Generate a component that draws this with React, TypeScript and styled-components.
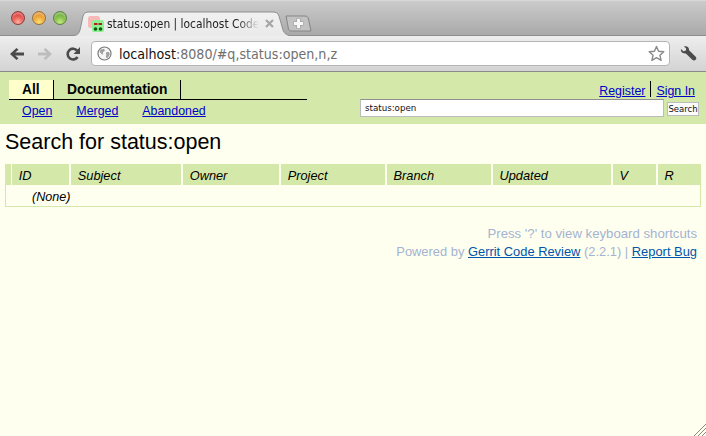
import styled, { createGlobalStyle } from "styled-components";
import type { ReactNode } from "react";

const GlobalStyle = createGlobalStyle`
  html, body {
    margin: 0;
    padding: 0;
    height: 100%;
    background: #fffff0;
    overflow: hidden;
  }
  #root {
    height: 100%;
  }
`;

const Page = styled.div`
  position: relative;
  width: 706px;
  height: 436px;
  overflow: hidden;
  background: #fffff0;
  font-family: "Liberation Sans", Arial, sans-serif;
  color: #000;
`;

/* browser chrome */
const TabStrip = styled.div`
  position: relative;
  z-index: 1;
  height: 35px;
  box-sizing: border-box;
  border-top: 1px solid #d8d8d8;
  background: linear-gradient(#cbcbcb, #a9a9a9);
  display: flex;
  align-items: flex-end;
  padding-left: 11px;
`;

const Lights = styled.div`
  display: flex;
  gap: 7px;
  align-self: flex-start;
  margin-top: 10px;
  width: 67px;
`;

const Light = styled.span<{ $top: string; $bottom: string; $edge: string }>`
  width: 14px;
  height: 14px;
  border-radius: 50%;
  box-sizing: border-box;
  border: 1px solid ${(p) => p.$edge};
  background: radial-gradient(
    circle at 50% 85%,
    ${(p) => p.$bottom} 0%,
    ${(p) => p.$top} 75%
  );
  box-shadow: inset 0 2px 2px rgba(255, 255, 255, 0.45);
`;

const Tab = styled.div`
  position: relative;
  width: 212px;
  height: 24px;
  display: flex;
  align-items: center;
  padding-left: 10px;
  box-sizing: border-box;
`;

const TabShape = styled.svg`
  position: absolute;
  left: -4px;
  bottom: -1px;
`;

const Favicon = styled.svg`
  position: relative;
  flex: none;
  margin-top: 2px;
`;

const TabTitle = styled.span`
  position: relative;
  width: 154px;
  margin-left: 3px;
  margin-top: 1px;
  overflow: hidden;
  white-space: nowrap;
  font: 11.9px "DejaVu Sans Condensed", "DejaVu Sans", sans-serif;
  color: #222;
  -webkit-mask-image: linear-gradient(to right, #000 130px, transparent 152px);
  mask-image: linear-gradient(to right, #000 130px, transparent 152px);
`;

const TabClose = styled.svg`
  position: relative;
  margin-left: 4px;
  flex: none;
`;

const NewTab = styled.svg`
  margin-bottom: 3px;
  margin-left: -5px;
  flex: none;
`;

const Toolbar = styled.div`
  height: 37px;
  box-sizing: border-box;
  border-top: 1px solid #8e8e8e;
  border-bottom: 1px solid #8a8a8a;
  background: linear-gradient(#eeeeee, #d3d3d3);
  display: flex;
  align-items: center;
  padding: 0 9px;
`;

const NavIcon = styled.svg<{ $gap: number }>`
  flex: none;
  margin-right: ${(p) => p.$gap}px;
`;

const AddressBar = styled.div`
  flex: none;
  width: 579px;
  height: 25px;
  box-sizing: border-box;
  border: 1px solid #b4b4b4;
  border-radius: 4px;
  background: #fff;
  display: flex;
  align-items: center;
  padding: 0 4px 0 5px;
  margin: 0 10px 0 1px;
`;

const Url = styled.div`
  flex: 1;
  margin-left: 7px;
  font: 14.1px "DejaVu Sans Condensed", "DejaVu Sans", sans-serif;
  color: #707070;
  white-space: nowrap;
`;

const UrlHost = styled.span`
  color: #111;
`;

/* gerrit header */
const Header = styled.div`
  height: 52px;
  background: #d4e9a9;
  display: flex;
  justify-content: space-between;
  box-sizing: border-box;
  padding: 8px 7px 0 9px;
`;

const MenuColumn = styled.div`
  width: 298px;
`;

const TopMenu = styled.div`
  display: flex;
  height: 20px;
  box-sizing: border-box;
  border-bottom: 1px solid #000;
`;

const TopItem = styled.div<{ $active?: boolean; $width: number }>`
  width: ${(p) => p.$width}px;
  box-sizing: border-box;
  border-right: 1px solid #000;
  background: ${(p) => (p.$active ? "#ffffcc" : "transparent")};
  font-size: 13.8px;
  font-weight: bold;
  line-height: 19px;
  padding-left: 13px;
`;

const SubMenu = styled.div`
  display: flex;
  gap: 24px;
  padding: 4px 0 0 13px;
`;

const Anchor = styled.a`
  color: #0000cc;
  text-decoration: underline;
  font-size: 12.4px;
`;

const SearchColumn = styled.div`
  display: flex;
  flex-direction: column;
  align-items: flex-end;
`;

const UserLinks = styled.div`
  display: flex;
  height: 16px;
  margin: 1px 4px 0 0;
  line-height: 20px;
`;

const UserLink = styled(Anchor)<{ $divider?: boolean }>`
  padding: ${(p) => (p.$divider ? "0 5px 0 0" : "0 0 0 5px")};
  border-right: ${(p) => (p.$divider ? "1px solid #000" : "none")};
`;

const SearchRow = styled.div`
  display: flex;
  align-items: center;
  gap: 3px;
  margin-top: 2px;
`;

const SearchInput = styled.input`
  width: 304px;
  height: 18px;
  box-sizing: border-box;
  border: 1px solid #bcbcbc;
  border-top: 1px solid #8f8f8f;
  background: #fff;
  padding: 0 4px;
  font: 8.7px "DejaVu Sans", sans-serif;
  color: #111;
  outline: none;
`;

const SearchButton = styled.button`
  width: 32px;
  height: 14px;
  margin-top: 2px;
  box-sizing: border-box;
  border: 1px solid #bdbdbd;
  background: #fbfbfb;
  padding: 0;
  font: 8.5px "DejaVu Sans", sans-serif;
  color: #111;
`;

/* search results */
const Title = styled.h1`
  margin: 0;
  padding: 6px 0 0 5px;
  height: 40px;
  box-sizing: border-box;
  font-size: 21.5px;
  font-weight: normal;
  line-height: 24px;
`;

const Results = styled.div`
  margin-left: 5px;
  width: 696px;
`;

const HeadRow = styled.div`
  display: flex;
  height: 21px;
`;

const HeadCell = styled.div<{ $width: number; $gap: number }>`
  width: ${(p) => p.$width}px;
  margin-right: ${(p) => p.$gap}px;
  box-sizing: border-box;
  padding-left: 6.4px;
  background: #d4e9a9;
  font-size: 12.8px;
  font-style: italic;
  line-height: 23px;
`;

const EmptyRow = styled.div`
  height: 22px;
  box-sizing: border-box;
  border-left: 1px solid #d4e9a9;
  border-right: 1px solid #d4e9a9;
  border-bottom: 1px solid #d4e9a9;
  padding-left: 26px;
  font-size: 12.6px;
  font-style: italic;
  line-height: 24px;
`;

const Footer = styled.div`
  margin: 18px 9px 0 0;
  text-align: right;
  line-height: 18px;
  color: #a3b3d1;
`;

const FooterLine = styled.div<{ $size: number }>`
  font-size: ${(p) => p.$size}px;
`;

const FooterLink = styled.a`
  color: #0055aa;
  text-decoration: underline;
`;

const Grip = styled.svg`
  position: absolute;
  right: 0;
  bottom: 0;
`;

const columns: { label: string; width: number; gap: number }[] = [
  { label: "", width: 6, gap: 1 },
  { label: "ID", width: 57, gap: 2 },
  { label: "Subject", width: 110, gap: 2 },
  { label: "Owner", width: 96, gap: 2 },
  { label: "Project", width: 104, gap: 2 },
  { label: "Branch", width: 104, gap: 2 },
  { label: "Updated", width: 118, gap: 2 },
  { label: "V", width: 43, gap: 2 },
  { label: "R", width: 43, gap: 0 },
];

function Icon({ size, gap, children }: { size: number; gap: number; children: ReactNode }) {
  return (
    <NavIcon $gap={gap} width={size} height={size} viewBox={`0 0 ${size} ${size}`}>
      {children}
    </NavIcon>
  );
}

function Chrome() {
  return (
    <>
      <TabStrip>
        <Lights>
          <Light $top="#d92a2a" $bottom="#ffb0a0" $edge="#8d3a3a" />
          <Light $top="#e0861a" $bottom="#ffe070" $edge="#96703a" />
          <Light $top="#5da52a" $bottom="#c4ea80" $edge="#5f8044" />
        </Lights>
        <Tab>
          <TabShape width="222" height="25" viewBox="0 0 222 25">
            <defs>
              <linearGradient id="tabFill" x1="0" y1="0" x2="0" y2="1">
                <stop offset="0" stopColor="#f1f1f1" />
                <stop offset="1" stopColor="#eaeaea" />
              </linearGradient>
            </defs>
            <path
              d="M0 25 C4 24 5 22 6 19 L9 5 C10 2 12 1 15 1 L199 1 C202 1 204 2 205 5 L209 19 C210 22 212 24 216 25 Z"
              fill="url(#tabFill)"
            />
            <path
              d="M0 24.5 C4 24 5 22 6 19 L9 5 C10 2 12 1 15 1 L199 1 C202 1 204 2 205 5 L209 19 C210 22 212 24 216 24.5"
              fill="none"
              stroke="#8f8f8f"
            />
          </TabShape>
          <Favicon width="16" height="16" viewBox="0 0 16 16">
            <rect x="0" y="0" width="12" height="12" rx="2.5" fill="#f8b8b8" />
            <rect x="4" y="4" width="12" height="12" rx="2" fill="#8ef08e" />
            <rect x="6" y="7" width="3.5" height="2" fill="#b02020" />
            <rect x="10.5" y="7" width="3.5" height="2" fill="#b02020" />
            <circle cx="7.5" cy="13" r="1.8" fill="#0a5a14" />
            <circle cx="12.5" cy="13" r="1.8" fill="#0a5a14" />
          </Favicon>
          <TabTitle>status:open | localhost Code</TabTitle>
          <TabClose width="9" height="9" viewBox="0 0 9 9">
            <path d="M1 1 L8 8 M8 1 L1 8" stroke="#a6a6a6" strokeWidth="2.2" />
          </TabClose>
        </Tab>
        <NewTab width="28" height="17" viewBox="0 0 28 17">
          <path
            d="M1 1 L20 1 C22 1 23 2 23.5 4 L26 16 L6 16 C4.5 16 4 15 3.5 14 Z"
            fill="#c2c2c2"
            stroke="#858585"
          />
          <path d="M13.5 3.5 V13.5 M8.5 8.5 H18.5" stroke="#8c8c8c" strokeWidth="4.4" opacity="0.55" />
          <path d="M13.5 4 V13 M9 8.5 H18" stroke="#f8f8f8" strokeWidth="3" />
        </NewTab>
      </TabStrip>
      <Toolbar>
        <Icon size={16} gap={12}>
          <path
            d="M1 8 L7.5 2 L9.5 3.8 L6.2 6.6 H15 V9.4 H6.2 L9.5 12.2 L7.5 14 Z"
            fill="#4b4b4b"
          />
        </Icon>
        <Icon size={16} gap={12}>
          <path
            d="M15 8 L8.5 2 L6.5 3.8 L9.8 6.6 H1 V9.4 H9.8 L6.5 12.2 L8.5 14 Z"
            fill="#bdbdbd"
          />
        </Icon>
        <Icon size={16} gap={9}>
          <path
            d="M12.6 11 A5.4 5.4 0 1 1 12.2 4.6"
            fill="none"
            stroke="#4b4b4b"
            strokeWidth="2.6"
          />
          <path d="M15 1 V8 H8.6 Z" fill="#4b4b4b" />
        </Icon>
        <AddressBar>
          <svg width="15" height="15" viewBox="0 0 17 17">
            <circle cx="8.5" cy="8.5" r="7.4" fill="#f6f6f6" stroke="#777" strokeWidth="1.3" />
            <path
              d="M4 4 L8 3 L9 5.5 L6.5 7.5 L7 10 L5 9 L3 6.5 Z M10 7.5 L13.5 6.5 L14.5 9.5 L12 13.5 L10 13 L10.5 10 Z"
              fill="#a0a0a0"
            />
          </svg>
          <Url>
            <UrlHost>localhost</UrlHost>:8080/#q,status:open,n,z
          </Url>
          <svg width="17" height="17" viewBox="0 0 17 17">
            <path
              d="M8.5 1.5 L10.6 6.3 L15.8 6.8 L11.9 10.2 L13.1 15.4 L8.5 12.7 L3.9 15.4 L5.1 10.2 L1.2 6.8 L6.4 6.3 Z"
              fill="#fff"
              stroke="#8a8a8a"
              strokeWidth="1.4"
              strokeLinejoin="round"
            />
          </svg>
        </AddressBar>
        <svg width="18" height="18" viewBox="0 0 18 18">
          <path
            d="M1 3.8 L3.6 6.2 L6 5.6 L6.6 3.2 L4.2 1 C7 0 9.8 1.6 9.6 5 L16.6 11.8 C17.6 12.8 17.4 14.2 16.6 15.2 C15.6 16.2 14 16.2 13 15.2 L6.2 8.4 C3 9 0.4 6.8 1 3.8 Z"
            fill="#4b4b4b"
          />
        </svg>
      </Toolbar>
    </>
  );
}

export default function App() {
  return (
    <Page>
      <GlobalStyle />
      <Chrome />
      <Header>
        <MenuColumn>
          <TopMenu>
            <TopItem $active $width={45}>All</TopItem>
            <TopItem $width={127}>Documentation</TopItem>
          </TopMenu>
          <SubMenu>
            <Anchor>Open</Anchor>
            <Anchor>Merged</Anchor>
            <Anchor>Abandoned</Anchor>
          </SubMenu>
        </MenuColumn>
        <SearchColumn>
          <UserLinks>
            <UserLink $divider>Register</UserLink>
            <UserLink>Sign In</UserLink>
          </UserLinks>
          <SearchRow>
            <SearchInput defaultValue="status:open" />
            <SearchButton>Search</SearchButton>
          </SearchRow>
        </SearchColumn>
      </Header>
      <Title>Search for status:open</Title>
      <Results>
        <HeadRow>
          {columns.map((c) => (
            <HeadCell key={c.label} $width={c.width} $gap={c.gap}>
              {c.label}
            </HeadCell>
          ))}
        </HeadRow>
        <EmptyRow>(None)</EmptyRow>
      </Results>
      <Footer>
        <FooterLine $size={13.2}>Press '?' to view keyboard shortcuts</FooterLine>
        <FooterLine $size={12.9}>
          Powered by <FooterLink>Gerrit Code Review</FooterLink> (2.2.1) | <FooterLink>Report Bug</FooterLink>
        </FooterLine>
      </Footer>
      <Grip width="13" height="13" viewBox="0 0 13 13">
        <path d="M1 13 L13 1 M5 13 L13 5 M9 13 L13 9" stroke="#8a8a7c" strokeWidth="1" fill="none" />
      </Grip>
    </Page>
  );
}
